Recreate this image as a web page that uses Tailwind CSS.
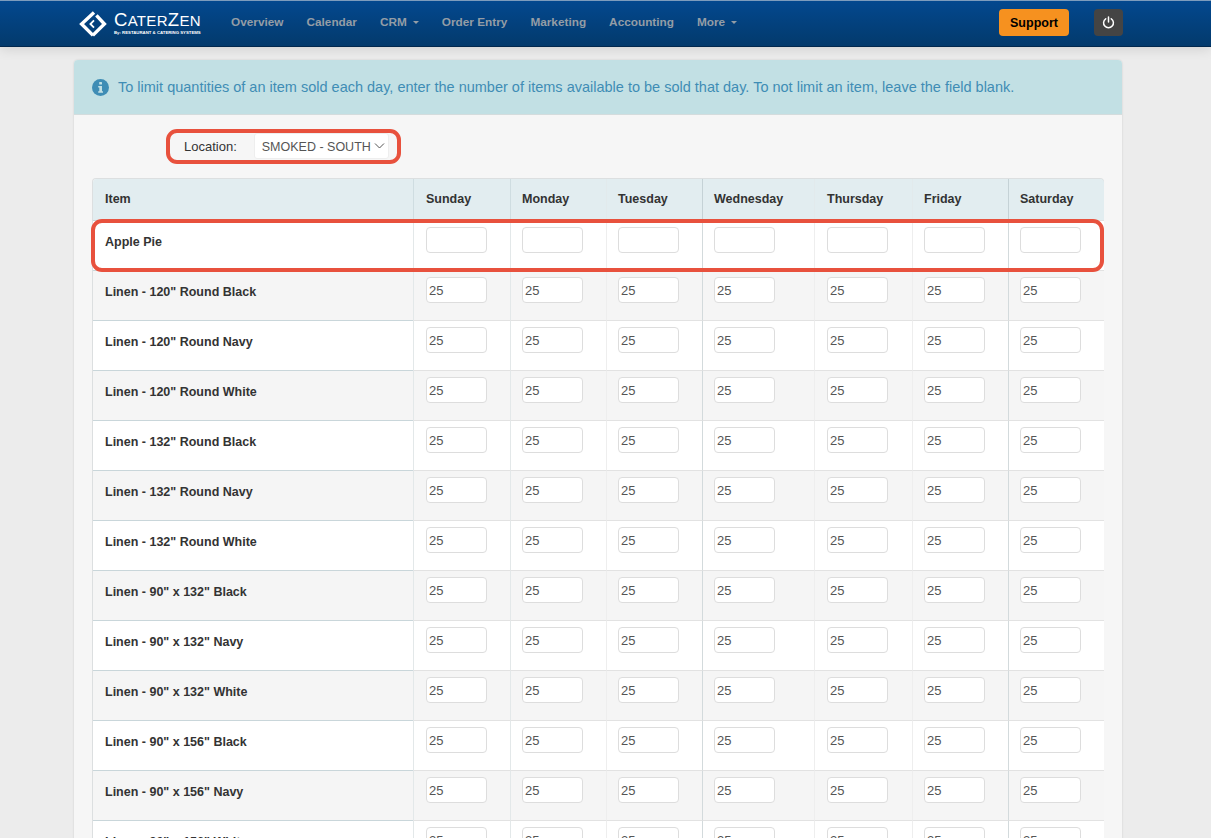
<!DOCTYPE html>
<html lang="en">
<head>
<meta charset="utf-8">
<title>CaterZen - Item Limits</title>
<script src="https://cdn.jsdelivr.net/npm/@tailwindcss/browser@4"></script>
</head>
<body class="h-screen overflow-hidden bg-[#ececec] font-['Liberation_Sans',Arial,sans-serif]">

<!-- Top nav -->
<nav class="relative z-10 flex h-[47px] items-center border-t border-b border-t-[#7d9cbd] border-b-[#01284e] bg-gradient-to-b from-[#03488f] to-[#033a6c] pb-[2px] pl-[79px] shadow-[0_2px_12px_rgba(0,0,0,0.12)]">
    <div class="flex items-center">
        <svg class="mt-[2px] h-[28px] w-[28px]" viewBox="0 0 28 28" fill="none" stroke="#ffffff" stroke-width="3.4">
            <path d="M15 2.5L2.6 14L14 25.4"/>
            <path d="M17.4 5.4L25.4 14L13.8 25.4"/>
            <path d="M15 10.4L11.4 14L15 17.6" stroke-width="1.8"/>
        </svg>
        <div class="ml-[7px] flex w-[87px] flex-col text-white">
            <span class="text-[18.5px] leading-[19px] tracking-[0.3px]">C<span class="text-[15px]">ATER</span>Z<span class="text-[15px]">EN</span></span>
            <span class="text-[4.3px] leading-[5px] font-bold whitespace-nowrap">By: RESTAURANT &amp; CATERING SYSTEMS</span>
        </div>
    </div>
    <ul class="ml-[30px] flex items-center gap-[23px] text-[11.8px] font-bold text-[#949da6]">
        <li>Overview</li>
        <li>Calendar</li>
        <li class="flex items-center gap-[6px]">CRM <span class="h-0 w-0 border-x-[3.5px] border-t-[3.5px] border-x-transparent border-t-[#949da6]"></span></li>
        <li>Order Entry</li>
        <li>Marketing</li>
        <li>Accounting</li>
        <li class="flex items-center gap-[6px]">More <span class="h-0 w-0 border-x-[3.5px] border-t-[3.5px] border-x-transparent border-t-[#949da6]"></span></li>
    </ul>
    <div class="ml-auto mr-[88px] flex items-center gap-[25px]">
        <button class="h-[27px] w-[70px] rounded-[4px] bg-[#f6911f] pt-px text-[12.5px] font-bold text-black">Support</button>
        <button class="flex h-[27px] w-[29px] items-center justify-center rounded-[4px] bg-[#444444]">
            <svg class="h-[13px] w-[13px]" viewBox="0 0 14 14" fill="none" stroke="#ffffff" stroke-width="1.6" stroke-linecap="round">
                <path d="M7 1v5.5"/>
                <path d="M4 3a5.3 5.3 0 1 0 6 0"/>
            </svg>
        </button>
    </div>
</nav>

<!-- Panel -->
<main class="ml-[74px] mt-[13px] w-[1048px] rounded-[4px] bg-[#f6f6f6] shadow-[0_0_2px_rgba(0,0,0,0.15)]">
    <div class="flex h-[55px] items-center gap-[9px] rounded-t-[4px] border-b border-[#d4dcdd] bg-[#c2e0e4] pl-[18px] text-[14.5px] text-[#3f8db5]">
        <svg class="h-[17px] w-[17px]" viewBox="0 0 17 17">
            <circle cx="8.5" cy="8.5" r="8.5" fill="#3f8db5"/>
            <rect x="7.2" y="3" width="2.8" height="2.6" rx="0.5" fill="#c2e0e4"/>
            <path d="M6.2 7h3.8v5.2h1v1.6H6.2v-1.6h1.1V8.6H6.2z" fill="#c2e0e4"/>
        </svg>
        <p class="pt-[2px]">To limit quantities of an item sold each day, enter the number of items available to be sold that day. To not limit an item, leave the field blank.</p>
    </div>

    <div class="px-[18px] pt-[18px]">
        <div class="relative flex h-[26px] items-center pl-[92px] text-[13px] text-[#333333]">
            <label class="pt-[2px]">Location:</label>
            <div class="ml-[17px] flex h-[26px] w-[135px] items-center justify-between rounded-[3px] border border-[#eeeeee] bg-white pl-[7px] pr-[3px] text-[12.5px] text-[#555555]">
                <span class="pt-[2px]">SMOKED - SOUTH</span>
                <svg class="h-[8px] w-[11px]" viewBox="0 0 11 8" fill="none" stroke="#555555" stroke-width="1"><path d="M1 1.5L5.5 6L10 1.5"/></svg>
            </div>
            <div class="absolute left-[74px] top-[-4px] h-[35px] w-[235px] rounded-[11px] border-4 border-[#e8513d]"></div>
        </div>

        <div class="relative mt-[19px] rounded-t-[4px] border-x border-t border-[#dcdfe0]">
            <table class="w-full table-fixed border-separate border-spacing-0 text-[12.5px] text-[#333333]">
                <colgroup>
                    <col class="w-[320px]"><col class="w-[97px]"><col class="w-[96px]"><col class="w-[96px]"><col class="w-[112px]"><col class="w-[98px]"><col class="w-[96px]"><col class="w-[96px]">
                </colgroup>
                <thead class="bg-[#e2edf0] text-left">
                    <tr class="h-[41px]">
                        <th class="rounded-tl-[4px] pl-3">Item</th>
                        <th class="border-l border-[#cfdde1] pl-3">Sunday</th>
                        <th class="border-l border-[#cfdde1] pl-[11px]">Monday</th>
                        <th class="border-l border-[#e2eaec] pl-[11px]">Tuesday</th>
                        <th class="border-l border-[#c5d2d6] pl-[11px]">Wednesday</th>
                        <th class="border-l border-[#e2eaec] pl-3">Thursday</th>
                        <th class="border-l border-[#e2eaec] pl-[11px]">Friday</th>
                        <th class="rounded-tr-[4px] border-l border-[#c5d2d6] pl-[11px]">Saturday</th>
                    </tr>
                </thead>
                <tbody id="rows"></tbody>
            </table>
            <div class="absolute left-[-2px] top-[40px] h-[53px] w-[1013px] rounded-[11px] border-4 border-[#e8513d]"></div>
        </div>
    </div>
</main>

<script>
    // Item rows; the first one has no limits entered yet
    const items = [
        ['Apple Pie', ''],
        ['Linen - 120" Round Black', '25'],
        ['Linen - 120" Round Navy', '25'],
        ['Linen - 120" Round White', '25'],
        ['Linen - 132" Round Black', '25'],
        ['Linen - 132" Round Navy', '25'],
        ['Linen - 132" Round White', '25'],
        ['Linen - 90" x 132" Black', '25'],
        ['Linen - 90" x 132" Navy', '25'],
        ['Linen - 90" x 132" White', '25'],
        ['Linen - 90" x 156" Black', '25'],
        ['Linen - 90" x 156" Navy', '25'],
        ['Linen - 90" x 156" White', '25']
    ];
    const dayCells = [
        'border-[#e3e8e9] pl-3',
        'border-[#e3e8e9] pl-[11px]',
        'border-[#eeeeee] pl-[11px]',
        'border-[#d3dadc] pl-[11px]',
        'border-[#eeeeee] pl-3',
        'border-[#eeeeee] pl-[11px]',
        'border-[#d3dadc] pl-[11px]'
    ];

    document.getElementById('rows').innerHTML = items.map(([name, qty], i) => {
        const rowBg = i % 2 ? 'bg-[#f5f5f5]' : 'bg-white';
        const days = dayCells.map(c => `
            <td class="border-l border-t border-t-[#e2e2e2] ${c} pt-[6px] align-top">
                <input type="text" value="${qty}" class="block h-[26px] w-[61px] rounded-[4px] border border-[#dddddd] bg-white pl-[2px] text-[13px] text-[#555555]">
            </td>`).join('');
        return `<tr class="h-[50px] ${rowBg}">
            <td class="border-t border-[#c9d6da] pl-3 pt-[13px] align-top font-bold leading-[16px]">${name.replace(/"/g, '&quot;')}</td>${days}
        </tr>`;
    }).join('');
</script>
</body>
</html>
